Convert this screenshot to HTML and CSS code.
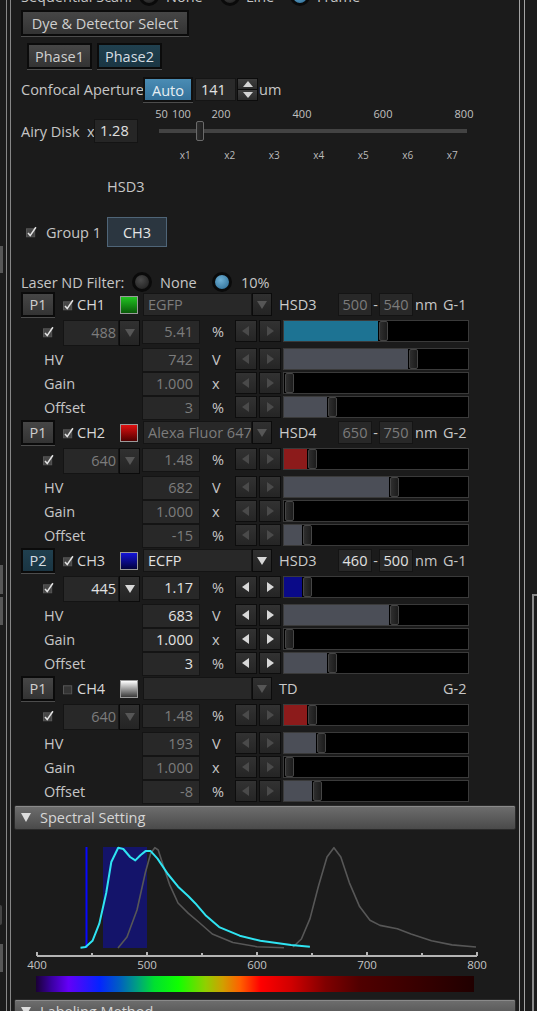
FILE: index.html
```html
<!DOCTYPE html>
<html lang="en">
<head>
  <meta charset="UTF-8">
  <title>Detector Settings</title>
  <link rel="stylesheet" href="styles.css">
</head>
<body>
  <div class="screen">
    <!-- bits of the neighbouring panel that peek in on the left -->
    <div class="edge">
      <span class="edge-mark m1"></span>
      <span class="edge-mark m2"></span>
      <span class="edge-mark m3"></span>
      <span class="edge-mark m4"></span>
      <span class="edge-mark m5"></span>
    </div>

    <div class="frame">
      <div class="panel">
        <!-- Scan mode (scrolled mostly out of view) -->
        <div class="seq-row">
          <span class="seq-label">Sequential Scan:</span>
          <span class="radio"></span><span class="opt opt-none">None</span>
          <span class="radio"></span><span class="opt opt-line">Line</span>
          <span class="radio on"></span><span class="opt">Frame</span>
        </div>

        <button class="btn dye-btn">Dye &amp; Detector Select</button>

        <div class="phase-row">
          <button class="btn phase-btn">Phase1</button>
          <button class="btn phase-btn on">Phase2</button>
        </div>

        <!-- Pinhole -->
        <div class="ap-row">
          <span class="ap-label">Confocal Aperture</span>
          <button class="btn auto-btn">Auto</button>
          <span class="ap-field">141</span>
          <span class="spin"><span class="up"></span><span class="down"></span></span>
          <span class="ap-unit">um</span>
        </div>
        <div class="scale-nums">
          <span></span><span>50</span><span>100</span><span>200</span><span>400</span><span>600</span><span>800</span>
        </div>
        <div class="airy-row">
          <span class="airy-label">Airy Disk</span>
          <span class="airy-x">x</span>
          <span class="airy-field">1.28</span>
          <div class="slider"><span class="slider-knob"></span></div>
        </div>
        <div class="x-nums">
          <span>x1</span><span>x2</span><span>x3</span><span>x4</span><span>x5</span><span>x6</span><span>x7</span>
        </div>

        <div class="hsd">HSD3</div>

        <div class="group-row">
          <span class="group-cb"><svg class="cb" viewBox="0 0 12 12"><use href="#tick"/></svg></span>
          <span class="group-label">Group 1</span>
          <button class="btn-flat">CH3</button>
        </div>

        <div class="nd-row">
          <span class="nd-label">Laser ND Filter:</span>
          <span class="radio"></span><span class="opt nd-none">None</span>
          <span class="radio on"></span><span class="opt nd-ten">10%</span>
        </div>

        <!-- CH1 -->
        <div class="ch">
          <div class="ch-head">
            <button class="btn p-btn">P1</button>
            <svg class="cb head-cb" viewBox="0 0 12 12"><use href="#tick"/></svg>
            <span class="ch-name">CH1</span>
            <span class="swatch green"></span>
            <div class="combo"><span class="combo-val">EGFP</span><span class="dd"></span></div>
            <span class="det">HSD3</span>
            <span class="rbox">500</span><span class="dash">-</span><span class="rbox">540</span>
            <span class="nm">nm</span><span class="grp">G-1</span>
          </div>
          <div class="ch-row laser">
            <span class="row-cb"><svg class="cb" viewBox="0 0 12 12"><use href="#tick"/></svg></span>
            <div class="wl"><span class="wl-val">488</span><span class="dd"></span></div>
            <span class="val">5.41</span><span class="unit">%</span>
            <span class="arr l"></span><span class="arr r"></span>
            <div class="track"><span class="fill blue" style="width:94px"></span><span class="knob"></span></div>
          </div>
          <div class="ch-row">
            <span class="row-label">HV</span>
            <span class="val">742</span><span class="unit">V</span>
            <span class="arr l"></span><span class="arr r"></span>
            <div class="track"><span class="fill" style="width:124px"></span><span class="knob"></span></div>
          </div>
          <div class="ch-row">
            <span class="row-label">Gain</span>
            <span class="val">1.000</span><span class="unit">x</span>
            <span class="arr l"></span><span class="arr r"></span>
            <div class="track"><span class="fill" style="width:0"></span><span class="knob"></span></div>
          </div>
          <div class="ch-row">
            <span class="row-label">Offset</span>
            <span class="val">3</span><span class="unit">%</span>
            <span class="arr l"></span><span class="arr r"></span>
            <div class="track"><span class="fill" style="width:43px"></span><span class="knob"></span></div>
          </div>
        </div>

        <!-- CH2 -->
        <div class="ch">
          <div class="ch-head">
            <button class="btn p-btn">P1</button>
            <svg class="cb head-cb" viewBox="0 0 12 12"><use href="#tick"/></svg>
            <span class="ch-name">CH2</span>
            <span class="swatch red"></span>
            <div class="combo"><span class="combo-val">Alexa Fluor 647</span><span class="dd"></span></div>
            <span class="det">HSD4</span>
            <span class="rbox">650</span><span class="dash">-</span><span class="rbox">750</span>
            <span class="nm">nm</span><span class="grp">G-2</span>
          </div>
          <div class="ch-row laser">
            <span class="row-cb"><svg class="cb" viewBox="0 0 12 12"><use href="#tick"/></svg></span>
            <div class="wl"><span class="wl-val">640</span><span class="dd"></span></div>
            <span class="val">1.48</span><span class="unit">%</span>
            <span class="arr l"></span><span class="arr r"></span>
            <div class="track"><span class="fill red" style="width:23px"></span><span class="knob"></span></div>
          </div>
          <div class="ch-row">
            <span class="row-label">HV</span>
            <span class="val">682</span><span class="unit">V</span>
            <span class="arr l"></span><span class="arr r"></span>
            <div class="track"><span class="fill" style="width:105px"></span><span class="knob"></span></div>
          </div>
          <div class="ch-row">
            <span class="row-label">Gain</span>
            <span class="val">1.000</span><span class="unit">x</span>
            <span class="arr l"></span><span class="arr r"></span>
            <div class="track"><span class="fill" style="width:0"></span><span class="knob"></span></div>
          </div>
          <div class="ch-row">
            <span class="row-label">Offset</span>
            <span class="val">-15</span><span class="unit">%</span>
            <span class="arr l"></span><span class="arr r"></span>
            <div class="track"><span class="fill" style="width:18px"></span><span class="knob"></span></div>
          </div>
        </div>

        <!-- CH3 (active group) -->
        <div class="ch live">
          <div class="ch-head">
            <button class="btn p-btn on">P2</button>
            <svg class="cb head-cb" viewBox="0 0 12 12"><use href="#tick"/></svg>
            <span class="ch-name">CH3</span>
            <span class="swatch blue"></span>
            <div class="combo"><span class="combo-val">ECFP</span><span class="dd"></span></div>
            <span class="det">HSD3</span>
            <span class="rbox">460</span><span class="dash">-</span><span class="rbox">500</span>
            <span class="nm">nm</span><span class="grp">G-1</span>
          </div>
          <div class="ch-row laser">
            <span class="row-cb"><svg class="cb" viewBox="0 0 12 12"><use href="#tick"/></svg></span>
            <div class="wl"><span class="wl-val">445</span><span class="dd"></span></div>
            <span class="val">1.17</span><span class="unit">%</span>
            <span class="arr l"></span><span class="arr r"></span>
            <div class="track"><span class="fill navy" style="width:18px"></span><span class="knob"></span></div>
          </div>
          <div class="ch-row">
            <span class="row-label">HV</span>
            <span class="val">683</span><span class="unit">V</span>
            <span class="arr l"></span><span class="arr r"></span>
            <div class="track"><span class="fill" style="width:105px"></span><span class="knob"></span></div>
          </div>
          <div class="ch-row">
            <span class="row-label">Gain</span>
            <span class="val">1.000</span><span class="unit">x</span>
            <span class="arr l"></span><span class="arr r"></span>
            <div class="track"><span class="fill" style="width:0"></span><span class="knob"></span></div>
          </div>
          <div class="ch-row">
            <span class="row-label">Offset</span>
            <span class="val">3</span><span class="unit">%</span>
            <span class="arr l"></span><span class="arr r"></span>
            <div class="track"><span class="fill" style="width:43px"></span><span class="knob"></span></div>
          </div>
        </div>

        <!-- CH4 (transmitted) -->
        <div class="ch">
          <div class="ch-head">
            <button class="btn p-btn">P1</button>
            <svg class="cb head-cb" viewBox="0 0 12 12"><use href="#box"/></svg>
            <span class="ch-name">CH4</span>
            <span class="swatch white"></span>
            <div class="combo"><span class="combo-val"></span><span class="dd"></span></div>
            <span class="det">TD</span>
            <span class="range-gap"></span>
            <span class="grp">G-2</span>
          </div>
          <div class="ch-row laser">
            <span class="row-cb"><svg class="cb" viewBox="0 0 12 12"><use href="#tick"/></svg></span>
            <div class="wl"><span class="wl-val">640</span><span class="dd"></span></div>
            <span class="val">1.48</span><span class="unit">%</span>
            <span class="arr l"></span><span class="arr r"></span>
            <div class="track"><span class="fill red" style="width:23px"></span><span class="knob"></span></div>
          </div>
          <div class="ch-row">
            <span class="row-label">HV</span>
            <span class="val">193</span><span class="unit">V</span>
            <span class="arr l"></span><span class="arr r"></span>
            <div class="track"><span class="fill" style="width:32px"></span><span class="knob"></span></div>
          </div>
          <div class="ch-row">
            <span class="row-label">Gain</span>
            <span class="val">1.000</span><span class="unit">x</span>
            <span class="arr l"></span><span class="arr r"></span>
            <div class="track"><span class="fill" style="width:0"></span><span class="knob"></span></div>
          </div>
          <div class="ch-row">
            <span class="row-label">Offset</span>
            <span class="val">-8</span><span class="unit">%</span>
            <span class="arr l"></span><span class="arr r"></span>
            <div class="track"><span class="fill" style="width:28px"></span><span class="knob"></span></div>
          </div>
        </div>

        <div class="section">Spectral Setting</div>

        <!-- spectra: x = 37 + (nm - 400) * 1.1 -->
        <svg class="chart" width="508" height="168" viewBox="11 833 508 168">
          <defs>
            <linearGradient id="rainbow" x1="0" x2="1" y1="0" y2="0">
              <stop offset="0" stop-color="#1a0036"/>
              <stop offset="0.035" stop-color="#3a00a0"/>
              <stop offset="0.074" stop-color="#6400f8"/>
              <stop offset="0.145" stop-color="#0424ff"/>
              <stop offset="0.192" stop-color="#0060c0"/>
              <stop offset="0.231" stop-color="#00a080"/>
              <stop offset="0.27" stop-color="#00e030"/>
              <stop offset="0.325" stop-color="#10ff00"/>
              <stop offset="0.387" stop-color="#90d000"/>
              <stop offset="0.426" stop-color="#d0a000"/>
              <stop offset="0.466" stop-color="#ff6000"/>
              <stop offset="0.513" stop-color="#ff0000"/>
              <stop offset="0.583" stop-color="#d00000"/>
              <stop offset="0.661" stop-color="#800000"/>
              <stop offset="0.739" stop-color="#500000"/>
              <stop offset="1" stop-color="#200000"/>
            </linearGradient>
          </defs>
          <rect x="103" y="850" width="44" height="101" fill="#14146a"/>
          <polyline class="em-gray" points="118,951 127,940 137,913 145.5,875 150.7,856.5 154.8,850.7 158.2,853 162.7,866.8 169.5,887.3 178,906 188.4,916.4 198.6,925 212.3,937 232.9,945.5 256.8,949.7 284,950.7"/>
          <polyline class="em-gray" points="293,950 301.4,942 310,921.6 318.5,889 327,860 333.9,850.7 340.8,860 349.3,885.6 359.6,909.6 370,923.3 380,928.4 397.3,931.8 411,937 431.5,943.8 452,947.9 476,950"/>
          <line x1="86.5" y1="850" x2="86.5" y2="951" stroke="#0808ff" stroke-width="2"/>
          <polyline class="em-cyan" points="80.5,950.7 85.6,950 92.5,943.8 99.3,926.7 106.2,896 111.3,865 118.2,850.7 123.3,852 130.1,860 135.3,863.4 140.4,858.2 145.5,854.1 150.7,854.1 157.5,861.6 167.8,877 178.1,889.7 188.4,899.3 195.2,906.2 205.5,918.2 219.2,930.1 239.7,938.7 260.3,943.8 291.1,947.9 309.9,949.7"/>
          <path class="axis" d="M37 959H477 M37 955V959 M92 956V959 M147 955V959 M202 956V959 M257 955V959 M312 956V959 M367 955V959 M422 956V959 M477 955V959"/>
          <text class="axis-num" x="37" y="972">400</text>
          <text class="axis-num" x="147" y="972">500</text>
          <text class="axis-num" x="257" y="972">600</text>
          <text class="axis-num" x="367" y="972">700</text>
          <text class="axis-num" x="477" y="972">800</text>
          <rect x="36" y="979" width="438" height="16" fill="url(#rainbow)"/>
        </svg>

        <div class="section">Labeling Method</div>
      </div>
    </div>

    <div class="side"><div class="side-frame"></div></div>
  </div>

  <svg class="defs" width="0" height="0">
    <symbol id="tick" viewBox="0 0 12 12">
      <rect x="0.5" y="2.5" width="9" height="9" fill="#474747" stroke="#5a5a5a"/>
      <path d="M2.2 7.2 L4.6 9.9 L10.8 0.8" fill="none" stroke="currentColor" stroke-width="1.7"/>
    </symbol>
    <symbol id="box" viewBox="0 0 12 12">
      <rect x="0.5" y="2.5" width="9" height="9" fill="#343434" stroke="#5a5a5a"/>
    </symbol>
  </svg>
</body>
</html>
```

FILE: styles.css
```css
* { box-sizing: border-box; }
html, body { margin: 0; height: 100%; }
body {
  background: #1b1b1b;
  color: #c6c6c6;
  font-family: "Open Sans", "Noto Sans", sans-serif;
  font-size: 14.5px;
  overflow: hidden;
}
button { font: inherit; padding: 0; cursor: default; }

.screen { display: flex; height: 1011px; overflow: hidden; }

/* left strip */
.edge { width: 3px; display: flex; flex-direction: column; }
.edge-mark { display: block; background: #575757; }
.edge-mark.m1 { margin-top: 246px; height: 27px; }
.edge-mark.m2 { margin-top: 292px; height: 29px; }
.edge-mark.m3 { margin-top: 3px; height: 28px; }
.edge-mark.m4 { margin-top: 280px; height: 20px; width: 2px; background: #444; border-radius: 0 3px 3px 0; }
.edge-mark.m5 { margin-top: 19px; height: 28px; }

/* double border round the panel */
.frame {
  margin-left: 3px;
  width: 519px;
  padding: 0 4px 0 3px;
  border-left: 1px solid #878787;
  border-right: 1px solid #a4a4a4;
}
.panel {
  display: flow-root;
  height: 100%;
  padding-left: 10px;
  border-left: 1px solid #878787;
  border-right: 1px solid #a4a4a4;
}
.side { flex: 1; padding: 594px 0 0 7px; }
.side-frame { height: 100%; border-left: 2px solid #8a8a8a; border-top: 2px solid #8a8a8a; }

/* buttons */
.btn {
  height: 26px;
  color: #cfcfcf;
  background: linear-gradient(#464646, #333);
  border: 2px solid #0b0b0b;
  box-shadow: 0 1px 0 #4c4c4c;
  line-height: 21px;
}
.btn.on { background: linear-gradient(#20404f, #1a3543); color: #d6dde2; }

/* radios */
.radio {
  width: 20px; height: 20px;
  border-radius: 50%;
  border: 3px solid #0a0a0a;
  background: radial-gradient(circle at 40% 35%, #4a4a4a, #262626 75%);
  flex: none;
}
.radio.on { background: radial-gradient(circle at 40% 35%, #6fb0d4, #3a7aa2 75%); }
.opt { color: #c6c6c6; }

.seq-row { display: flex; align-items: center; height: 20px; margin-top: -14px; white-space: nowrap; }
.seq-label { width: 118px; }
.seq-row .opt { padding-left: 7px; }
.opt-none { width: 61px; }
.opt-line { width: 50px; padding-left: 6px !important; }

.dye-btn { display: block; width: 168px; margin-top: 4px; }

.phase-row { display: flex; gap: 5px; margin-top: 7px; padding-left: 6px; }
.phase-btn { width: 65px; }

/* pinhole row */
.ap-row { display: flex; align-items: center; height: 25px; margin-top: 8px; }
.ap-label { width: 122px; white-space: nowrap; }
.auto-btn {
  width: 50px; height: 25px;
  background: linear-gradient(#4a8cb4, #34719a);
  color: #e6eef3;
  border-color: #101010;
  line-height: 23px;
}
.ap-field {
  width: 41px; height: 23px;
  margin-left: 2px;
  padding-left: 5px;
  line-height: 22px;
  background: #2a2a2a;
  border: 1px solid #151515;
  color: #e2e2e2;
}
.spin { width: 21px; height: 23px; display: flex; flex-direction: column; border: 1px solid #0c0c0c; margin-left: 1px; gap: 1px; background: #0c0c0c; }
.spin span { flex: 1; display: flex; align-items: center; justify-content: center; background: linear-gradient(#3e3e3e, #2b2b2b); }
.spin span::before { content: ""; border-left: 5px solid transparent; border-right: 5px solid transparent; }
.spin .up::before { border-bottom: 6px solid #d4d4d4; }
.spin .down::before { border-top: 6px solid #d4d4d4; }
.ap-unit { margin-left: 1px; }

.scale-nums {
  display: grid;
  grid-template-columns: 130px 21px 18px 62px 100px 62px 100px;
  margin-top: 6px;
  height: 12px;
  font-size: 11px;
  line-height: 12px;
  text-align: center;
  color: #c0c0c0;
}

.airy-row { display: flex; align-items: center; height: 24px; margin-top: -1px; }
.airy-label { width: 66px; }
.airy-x { width: 7px; }
.airy-field {
  width: 44px; height: 24px;
  padding-left: 5px;
  line-height: 22px;
  background: #262626;
  border: 1px solid #141414;
  color: #e0e0e0;
}
.slider {
  display: flex; align-items: center;
  width: 308px; height: 20px;
  margin-left: 21px;
  background: linear-gradient(#434343, #434343) center / 100% 4px no-repeat;
}
.slider-knob {
  width: 8px; height: 20px;
  margin-left: 37px;
  background: linear-gradient(90deg, #2e2e2e, #1f1f1f);
  border: 1px solid #6a6a6a;
  border-radius: 2px;
}

.x-nums {
  display: grid;
  grid-template-columns: repeat(7, 44.5px);
  margin-top: 6px;
  padding-left: 142px;
  height: 12px;
  font-size: 10px;
  line-height: 12px;
  text-align: center;
  color: #bcbcbc;
}

.hsd { margin-top: 16px; padding-left: 86px; line-height: 20px; }

.group-row { display: flex; align-items: center; height: 30px; margin-top: 20px; }
.group-cb { width: 25px; padding-left: 5px; display: flex; color: #bdbdbd; }
.group-label { width: 61px; }
.btn-flat {
  width: 60px; height: 30px;
  background: #2b3640;
  border: 1px solid #4f6578;
  color: #e6e6e6;
}

.nd-row { display: flex; align-items: center; height: 20px; margin-top: 25px; }
.nd-label { width: 111px; white-space: nowrap; }
.nd-none { width: 60px; padding-left: 8px; }
.nd-ten { padding-left: 9px; }

/* check boxes */
.cb { width: 11px; height: 12px; color: #e2e2e2; flex: none; }

/* channel blocks */
.ch { height: 128px; }
.ch-head { display: flex; align-items: center; height: 25px; margin-bottom: 3px; white-space: nowrap; }
.p-btn { width: 34px; height: 25px; line-height: 20px; }
.head-cb { margin-left: 8px; }
.ch-name { width: 46px; padding-left: 3px; color: #d8d8d8; }
.swatch { width: 18px; height: 18px; border: 1px solid #9a9a9a; flex: none; }
.swatch.green { background: linear-gradient(#22c422, #0a5a0a); }
.swatch.red { background: linear-gradient(#e01010, #500000); }
.swatch.blue { background: linear-gradient(#1414d8, #02023c); }
.swatch.white { background: linear-gradient(#ffffff, #3a3a3a); }

.combo { display: flex; width: 129px; height: 23px; margin-left: 5px; }
.combo-val {
  flex: 1;
  padding-left: 4px;
  line-height: 21px;
  overflow: hidden;
  background: #282828;
  border: 1px solid #141414;
  color: #7c7c7c;
}
.dd {
  width: 20px;
  display: flex; align-items: center; justify-content: center;
  background: linear-gradient(#303030, #242424);
  border: 1px solid #0b0b0b;
  color: #565656;
  flex: none;
}
.dd::before { content: ""; border-left: 5px solid transparent; border-right: 5px solid transparent; border-top: 8px solid currentColor; }

.det { width: 66px; padding-left: 7px; color: #cbcbcb; }
.rbox {
  width: 34px; height: 23px;
  line-height: 21px;
  text-align: center;
  background: #282828;
  border: 1px solid #141414;
  color: #7c7c7c;
}
.dash { width: 7px; text-align: center; }
.nm { width: 30px; padding-left: 2px; }
.range-gap { width: 105px; }

.ch-row { display: flex; align-items: flex-start; height: 24px; }
.ch-row.laser { height: 28px; }
.row-cb { width: 42px; height: 24px; padding-left: 22px; display: flex; align-items: center; color: #8c8c8c; }
.wl { display: flex; width: 77px; height: 26px; margin-right: 2px; }
.wl-val {
  flex: 1;
  padding-right: 2px;
  text-align: right;
  line-height: 24px;
  background: #282828;
  border: 1px solid #141414;
  color: #7c7c7c;
}
.wl .dd { width: 21px; }
.row-label { width: 121px; padding-left: 23px; line-height: 24px; }
.val {
  width: 58px; height: 24px;
  padding-right: 6px;
  text-align: right;
  line-height: 22px;
  background: #282828;
  border: 1px solid #141414;
  color: #7c7c7c;
}
.unit { width: 35px; padding-left: 12px; line-height: 24px; }

.arr {
  width: 22px; height: 22px;
  display: flex; align-items: center; justify-content: center;
  background: linear-gradient(#323232, #252525);
  border: 1px solid #0d0d0d;
  color: #4a4a4a;
}
.arr + .arr { margin-left: 2px; }
.arr::before { content: ""; border-top: 5px solid transparent; border-bottom: 5px solid transparent; }
.arr.l::before { border-right: 7px solid currentColor; margin-right: 1px; }
.arr.r::before { border-left: 7px solid currentColor; margin-left: 1px; }

.track {
  display: flex;
  width: 186px; height: 22px;
  margin-left: 2px;
  background: #000;
  border: 1px solid #3a3a3a;
}
.fill { height: 100%; background: #4b4e57; }
.fill.blue { background: #1d7393; }
.fill.red { background: #8c1b1b; }
.fill.navy { background: #0a0a88; }
.knob {
  width: 9px; height: 100%;
  margin-left: 1px;
  background: linear-gradient(90deg, #2e2e2e, #1c1c1c);
  border: 1px solid #454545;
  border-radius: 2px;
}

/* the active channel shows its values */
.live .combo-val,
.live .wl-val,
.live .val,
.live .rbox { color: #e2e2e2; }
.live .arr,
.live .dd { color: #d8d8d8; }
.live .row-cb { color: #e2e2e2; }

/* collapsible sections */
.section {
  display: flex; align-items: center;
  height: 25px;
  margin: 1px 3px 0 -7px;
  padding-left: 6px;
  background: linear-gradient(#6e6e6e, #4a4a4a);
  border: 1px solid #2a2a2a;
  border-radius: 2px;
  box-shadow: inset 0 1px 0 #8a8a8a;
  color: #d6d6d6;
}
.section::before {
  content: "";
  margin-right: 9px;
  border-left: 5px solid transparent;
  border-right: 5px solid transparent;
  border-top: 9px solid #dedede;
}

.chart { display: block; margin-left: -10px; }
.em-gray { fill: none; stroke: #575757; stroke-width: 1.6; stroke-linejoin: round; }
.em-cyan { fill: none; stroke: #2fe4f2; stroke-width: 2; stroke-linejoin: round; }
.axis { fill: none; stroke: #b4b4b4; stroke-width: 2; }
.axis-num { fill: #c4c4c4; font-size: 11.5px; text-anchor: middle; font-family: "Open Sans", sans-serif; }

.defs { display: block; }
```
